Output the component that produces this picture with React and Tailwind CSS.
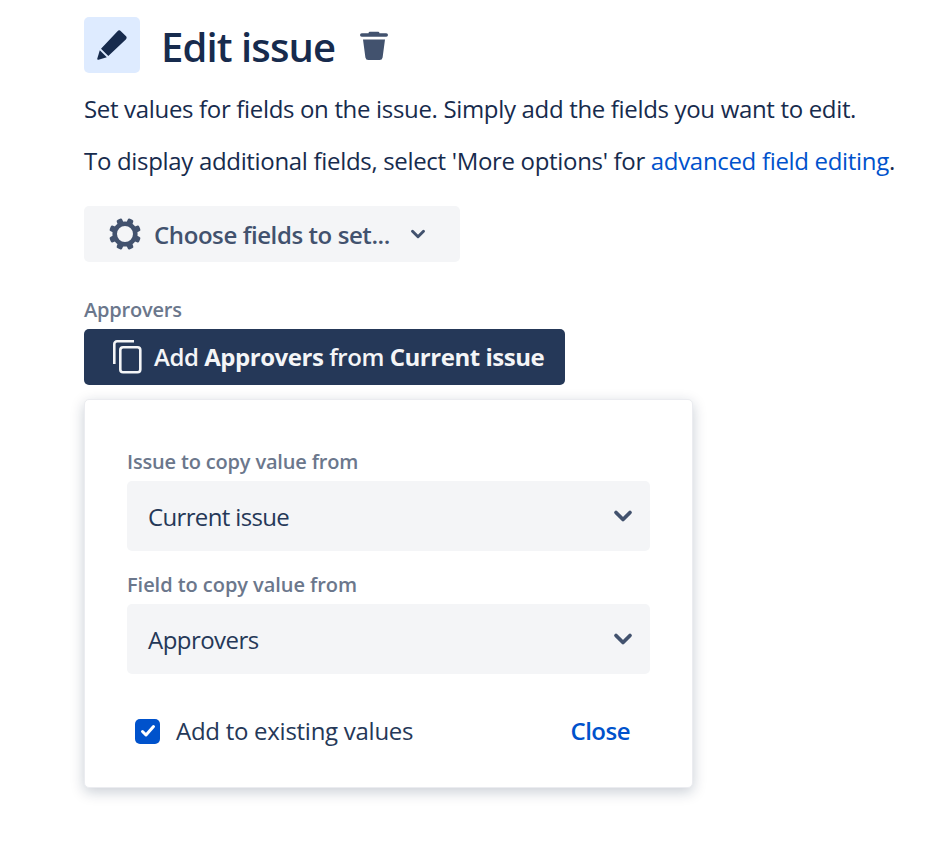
import React from "react";
import { ChevronDown } from "lucide-react";

const FONT = "font-['Open_Sans','Noto_Sans',sans-serif]";

function PencilIcon() {
  return (
    <svg width="30" height="30" viewBox="0 0 30 30" fill="#172b4d">
      <path d="M20.500 1.200a2.400 2.400 0 0 1 3.400 0l4.900 4.900a2.400 2.400 0 0 1 0 3.400L11.300 26 4 18.700z" />
      <path d="M2.800 20.300l7 7-8.300 2.400a1 1 0 0 1-1.200-1.200z" />
    </svg>
  );
}

function TrashIcon() {
  return (
    <svg width="28" height="30" viewBox="0 0 28 30" fill="#42526e">
      <path d="M10 .8h8a1.500 1.500 0 0 1 1.500 1.400h6.700a1.700 1.700 0 0 1 0 3.600H1.800a1.700 1.700 0 0 1 0-3.600h6.700A1.500 1.500 0 0 1 10 .8z" />
      <path d="M3 8.500h22l-2.400 18a3 3 0 0 1-3 2.500H8.400a3 3 0 0 1-3-2.500z" />
    </svg>
  );
}

function GearIcon() {
  return (
    <svg width="32" height="32" viewBox="0 0 32 32" fill="#42526e">
      <circle cx="16" cy="16" r="10.300" fill="none" stroke="#42526e" strokeWidth="4.600" />
      {[22.5, 67.5, 112.5, 157.5, 202.5, 247.5, 292.5, 337.5].map((a) => (
        <rect key={a} x="13" y="0" width="6" height="7" rx="1.800" transform={`rotate(${a} 16 16)`} />
      ))}
    </svg>
  );
}

function CopyIcon() {
  return (
    <svg width="30" height="34" viewBox="0 0 30 34" fill="none" stroke="#f4f5f7" strokeWidth="2.600" strokeLinejoin="round">
      <path d="M21 1.300H4A2.700 2.700 0 0 0 1.300 4v20" />
      <rect x="7.300" y="7.300" width="20" height="25" rx="2.800" />
    </svg>
  );
}

function SelectField({ label, value, labelTracking, tracking }) {
  return (
    <div>
      <div className={`h-[25px] text-[20px] leading-[25px] font-semibold text-[#6b778c] ${labelTracking}`}>{label}</div>
      <div className="mt-[7px] flex h-[70px] items-center justify-between rounded-[5px] bg-[#f4f5f7] pl-[21px] pr-[13px] text-[24px] text-[#253858]">
        <span className={`pt-[2px] ${tracking}`}>{value}</span>
        <ChevronDown size={28} strokeWidth={3.2} className="text-[#42526e]" />
      </div>
    </div>
  );
}

export default function App() {
  return (
    <div className={`${FONT} min-h-[843px] bg-white pl-[84px] pt-[17px] text-[#172b4d]`}>
      {/* header */}
      <div className="flex items-center">
        <div className="flex h-[56px] w-[56px] items-center justify-center rounded-[5px] bg-[#deebff]">
          <PencilIcon />
        </div>
        <h1 className="ml-[21px] pt-[4px] text-[40px] leading-[52px] font-semibold tracking-[-0.9px] text-[#172b4d]">Edit issue</h1>
        <div className="ml-[25px] mt-[1px]">
          <TrashIcon />
        </div>
      </div>

      {/* description */}
      <p className="mt-[18px] text-[24px] leading-[36px] tracking-[-0.33px] whitespace-nowrap">
        Set values for fields on the issue. Simply add the fields you want to edit.
      </p>
      <p className="mt-[16px] text-[24px] leading-[36px] tracking-[-0.32px] whitespace-nowrap">
        To display additional fields, select 'More options' for{" "}
        <span className="text-[#0052cc]">advanced field editing</span>.
      </p>

      {/* field picker */}
      <div className="mt-[27px] flex h-[56px] w-[376px] items-center rounded-[5px] bg-[#f4f5f7] pl-[25px] text-[#42526e]">
        <GearIcon />
        <span className="ml-[13px] pt-[2px] text-[24px] font-semibold tracking-[-0.41px] whitespace-nowrap">Choose fields to set...</span>
        <ChevronDown size={22} strokeWidth={3.2} className="ml-[17px]" />
      </div>

      {/* approvers */}
      <div className="mt-[35px] h-[25px] text-[20px] leading-[25px] font-semibold tracking-[-0.2px] text-[#6b778c]">Approvers</div>
      <div className="mt-[7px] flex h-[56px] w-[481px] items-center rounded-[5px] bg-[#253858] pl-[29px] text-[#f4f5f7]">
        <CopyIcon />
        <span className="ml-[11px] text-[24px] font-semibold tracking-[-0.46px] whitespace-nowrap">
          Add <b className="font-bold">Approvers</b> from <b className="font-bold">Current issue</b>
        </span>
      </div>

      {/* copy value panel */}
      <div className="mt-[14px] w-[609px] rounded-[5px] border border-[#ebecf0] bg-white px-[42px] pt-[49px] pb-[38px] shadow-[0_4px_14px_rgba(9,30,66,0.22)]">
        <div className="flex flex-col gap-[21px]">
          <SelectField label="Issue to copy value from" value="Current issue" labelTracking="tracking-[-0.17px]" tracking="tracking-[-0.65px]" />
          <SelectField label="Field to copy value from" value="Approvers" labelTracking="tracking-[-0.05px]" tracking="tracking-[-0.55px]" />
        </div>
        <div className="mt-[39px] flex items-center justify-between pl-[8px] pr-[20px]">
          <div className="flex items-center">
            <div className="flex h-[25px] w-[25px] items-center justify-center rounded-[5px] bg-[#0052cc]">
              <svg width="16" height="14" viewBox="0 0 16 14" fill="none" stroke="#fff" strokeWidth="3" strokeLinecap="round" strokeLinejoin="round">
                <path d="M2.500 7.500l3.500 3.500 7.500-8.500" />
              </svg>
            </div>
            <span className="ml-[16px] text-[24px] tracking-[-0.27px] text-[#253858]">Add to existing values</span>
          </div>
          <span className="text-[24px] font-semibold tracking-[-0.5px] text-[#0052cc]">Close</span>
        </div>
      </div>
    </div>
  );
}
